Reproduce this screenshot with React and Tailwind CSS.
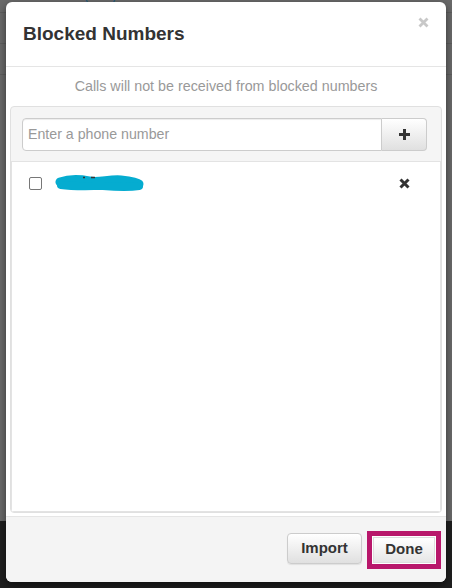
import React from "react";

function Scribble() {
  return (
    <svg width="90" height="17" viewBox="0 0 90 17" className="block">
      <g stroke="#05acd0" strokeLinecap="round" strokeLinejoin="round" fill="none">
        <path d="M5 7 C 14 4, 24 4, 34 6 C 44 8, 54 4, 66 5 C 76 6, 82 7, 84 9" strokeWidth="9" />
        <path d="M6 10 C 20 12, 36 11, 48 11 C 60 12, 72 13, 84 11" strokeWidth="8" />
      </g>
      <path d="M28 2.5 L30 2.5 M36 2.5 L40 2.5" stroke="#333" strokeWidth="1.5" />
    </svg>
  );
}

function Times({ size = 11, color = "#333", w = 3 }) {
  return (
    <svg width={size} height={size} viewBox="0 0 11 11" className="block">
      <path d="M1.5 1.5 L9.5 9.5 M9.5 1.5 L1.5 9.5" stroke={color} strokeWidth={w} strokeLinecap="butt" />
    </svg>
  );
}

export default function App() {
  return (
    <div
      className="relative w-[452px] h-[588px] overflow-hidden bg-[#6a6a6a]"
      style={{ fontFamily: '"Liberation Sans", Arial, sans-serif' }}
    >
      {/* background page */}
      <div className="flex flex-col h-full">
        <div className="h-[13px] border-b border-[#5e5e5e]" />
        <div className="h-[31px] border-b border-[#5e5e5e]" />
        <div className="h-[31px] border-b border-[#5e5e5e]" />
        <div className="flex-1" />
        <div className="h-[67px] bg-[#1f1f1f]" />
      </div>
      <div className="absolute left-[84px] top-[-12px] text-[14px] leading-[14px] text-[#1c5b7c]">
        (555) 555-5555
      </div>

      {/* modal */}
      <div className="absolute left-[6px] top-[2px] w-[440px] h-[580px] rounded-[6px] bg-white flex flex-col overflow-hidden shadow-[0_3px_9px_rgba(0,0,0,0.5)]">
        <div className="h-[65px] shrink-0 border-b border-[#e5e5e5] flex items-center justify-between pl-[17px] pr-[17px]">
          <div className="text-[19px] font-bold text-[#333] pt-[1px]">Blocked Numbers</div>
          <div className="self-start mt-[15px]">
            <Times size={11} color="#c8c8c8" w={2.8} />
          </div>
        </div>

        <div className="flex-1 flex flex-col px-[4px] pb-[3px] min-h-0">
          <div className="h-[39px] flex items-center justify-center text-[14.3px] text-[#999] pt-[1px]">
            Calls will not be received from blocked numbers
          </div>
          <div className="flex-1 flex flex-col border border-[#e0e0e0] rounded-[4px] bg-[#f5f5f5] overflow-hidden">
            <div className="pl-[11px] pr-[14px] pt-[11px] pb-[10px] border-b border-[#e3e3e3]">
              <div className="flex h-[33px]">
                <div className="flex-1 flex items-center border border-[#ccc] rounded-l-[4px] bg-white pl-[5px] text-[14.2px] text-[#999] shadow-[inset_0_1px_1px_rgba(0,0,0,0.075)]">
                  Enter a phone number
                </div>
                <div className="w-[45px] flex items-center justify-center border border-l-0 border-[#ccc] rounded-r-[4px] bg-gradient-to-b from-white to-[#e0e0e0]">
                  <svg width="13" height="13" viewBox="0 0 13 13" className="block">
                    <path d="M6.5 1 V12 M1 6.5 H12" stroke="#333" strokeWidth="3" />
                  </svg>
                </div>
              </div>
            </div>
            <div className="flex-1 bg-white border-l border-r border-b border-[#e3e3e3] pt-[13px]">
              <div className="flex items-center h-[17px] pl-[17px] pr-[30px]">
                <div className="w-[13px] h-[13px] rounded-[2px] border border-[#777] bg-white" />
                <div className="ml-[13px]">
                  <Scribble />
                </div>
                <div className="flex-1" />
                <Times size={11} color="#333" w={3} />
              </div>
            </div>
          </div>
        </div>

        <div className="h-[66px] shrink-0 border-t border-[#e5e5e5] bg-[#f4f4f4] flex items-center justify-end pr-[5px] gap-[5px]">
          <div className="w-[75px] h-[31px] mt-[-3px] flex items-center justify-center rounded-[4px] border border-[#ccc] bg-gradient-to-b from-white to-[#e0e0e0] text-[15px] font-bold text-[#333] shadow-[0_1px_1px_rgba(0,0,0,0.08)]">
            Import
          </div>
          <div className="w-[74px] h-[38px] border-[5px] border-[#b8176b] bg-white p-[1px] flex">
            <div className="flex-1 flex items-center justify-center border border-[#ddd] bg-gradient-to-b from-white to-[#e6e6e6] text-[15px] font-bold text-[#333]">
              Done
            </div>
          </div>
        </div>
      </div>
    </div>
  );
}
